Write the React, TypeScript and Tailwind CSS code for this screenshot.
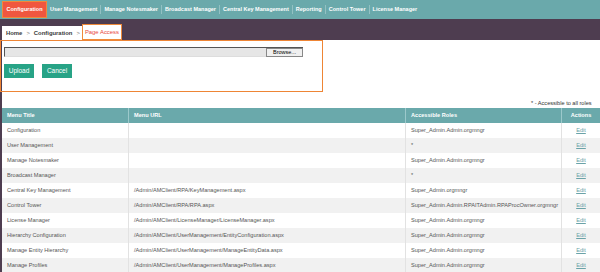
import React from "react";

const navItems = [
  "User Management",
  "Manage Notesmaker",
  "Broadcast Manager",
  "Central Key Management",
  "Reporting",
  "Control Tower",
  "License Manager",
];

const rows: [string, string, string][] = [
  ["Configuration", "", "Super_Admin.Admin.orgmngr"],
  ["User Management", "", "*"],
  ["Manage Notesmaker", "", "Super_Admin.Admin.orgmngr"],
  ["Broadcast Manager", "", "*"],
  ["Central Key Management", "/Admin/AMClient/RPA/KeyManagement.aspx", "Super_Admin.orgmngr"],
  ["Control Tower", "/Admin/AMClient/RPA/RPA.aspx", "Super_Admin.Admin.RPAITAdmin.RPAProcOwner.orgmngr"],
  ["License Manager", "/Admin/AMClient/LicenseManager/LicenseManager.aspx", "Super_Admin.Admin.orgmngr"],
  ["Hierarchy Configuration", "/Admin/AMClient/UserManagement/EntityConfiguration.aspx", "Super_Admin.Admin.orgmngr"],
  ["Manage Entity Hierarchy", "/Admin/AMClient/UserManagement/ManageEntityData.aspx", "Super_Admin.Admin.orgmngr"],
  ["Manage Profiles", "/Admin/AMClient/UserManagement/ManageProfiles.aspx", "Super_Admin.Admin.orgmngr"],
];

export default function App() {
  return (
    <div
      className="w-[600px] h-[272px] overflow-hidden bg-white relative"
      style={{ fontFamily: '"Liberation Sans", Arial, sans-serif' }}
    >
      {/* top nav */}
      <div className="h-[19px] bg-[#6aa9ab] flex items-center pl-[2px]">
        <div className="h-[17px] border-[1.5px] border-[#ef8a3a] bg-[#f0563f] flex items-center px-[3.5px] text-white font-bold text-[5.5px] whitespace-nowrap">
          Configuration
        </div>
        {navItems.map((n, i) => (
          <div key={n} className="flex items-center">
            {i > 0 && <div className="w-px h-[9px] bg-[#93c1c3]" />}
            <div className="px-[3px] text-white font-bold text-[5.5px] whitespace-nowrap">{n}</div>
          </div>
        ))}
      </div>

      {/* purple band with breadcrumb */}
      <div className="h-[21px] bg-[#4e3d50] flex items-end pl-[2px]">
        <div className="h-[14px] bg-white flex items-center pl-[4px] text-[5.9px] font-bold text-[#3a3a3a] whitespace-nowrap">
          <span>Home</span>
          <span className="mx-[4px] text-[#777] font-normal">&gt;</span>
          <span>Configuration</span>
          <span className="ml-[4px] mr-[2px] text-[#777] font-normal">&gt;</span>
          <span className="h-[16px] -mt-[2px] border-[1.5px] border-[#ef8a3a] bg-white px-[2px] flex items-center text-[#e8453a] font-normal">
            Page Access
          </span>
        </div>
      </div>

      {/* content */}
      <div className="flex">
        <div className="w-[2px] h-[232px] bg-[#4e3d50] shrink-0" />
        <div className="flex-1 min-w-0">
          <div className="-ml-[2px] w-[323px] h-[52px] border-[1.5px] border-[#ee8535] pt-[6px] pl-[3px]">
            <div className="w-[299px] h-[10px] flex bg-[#e6e6e6] border-t border-l border-[#555] border-b border-b-[#ddd]">
              <div className="flex-1" />
              <div className="w-[37px] h-[9px] bg-[#f0f0f0] border border-[#888] flex items-center justify-center text-[5.5px] text-black">
                Browse...
              </div>
            </div>
            <div className="flex gap-[8px] mt-[7px]">
              <div className="w-[30px] h-[14px] bg-[#27a386] text-white text-[6.5px] flex items-center justify-center">Upload</div>
              <div className="w-[30px] h-[14px] bg-[#27a386] text-white text-[6.5px] flex items-center justify-center">Cancel</div>
            </div>
          </div>

          <div className="h-[16px] flex items-end pb-[1px] pl-[529px] whitespace-nowrap text-[5.6px] text-[#333]">
            * - Accessible to all roles
          </div>

          <div className="w-[620px]">
            <div className="h-[15px] bg-[#6aa9ab] flex text-white font-bold text-[5.6px]">
              <div className="w-[127px] flex items-center pl-[5px] border-r border-[#9cc9cb]">Menu Title</div>
              <div className="w-[277px] flex items-center pl-[5px] border-r border-[#9cc9cb]">Menu URL</div>
              <div className="w-[156px] flex items-center pl-[5px] border-r border-[#9cc9cb]">Accessible Roles</div>
              <div className="w-[38px] flex items-center justify-center">Actions</div>
            </div>
            {rows.map((r, i) => (
              <div
                key={i}
                className={`h-[15px] flex text-[5.6px] text-[#555] whitespace-nowrap ${i % 2 === 1 ? "bg-[#f1f1f1]" : "bg-white"}`}
              >
                <div className="w-[127px] flex items-center pl-[5px] border-r border-[#e2e2e2]">{r[0]}</div>
                <div className="w-[277px] flex items-center pl-[5px] border-r border-[#e2e2e2]">{r[1]}</div>
                <div className="w-[156px] flex items-center pl-[5px] border-r border-[#e2e2e2]">{r[2]}</div>
                <div className="w-[38px] flex items-center justify-center text-[#6aa3a8] underline">Edit</div>
              </div>
            ))}
          </div>
        </div>
      </div>
    </div>
  );
}
